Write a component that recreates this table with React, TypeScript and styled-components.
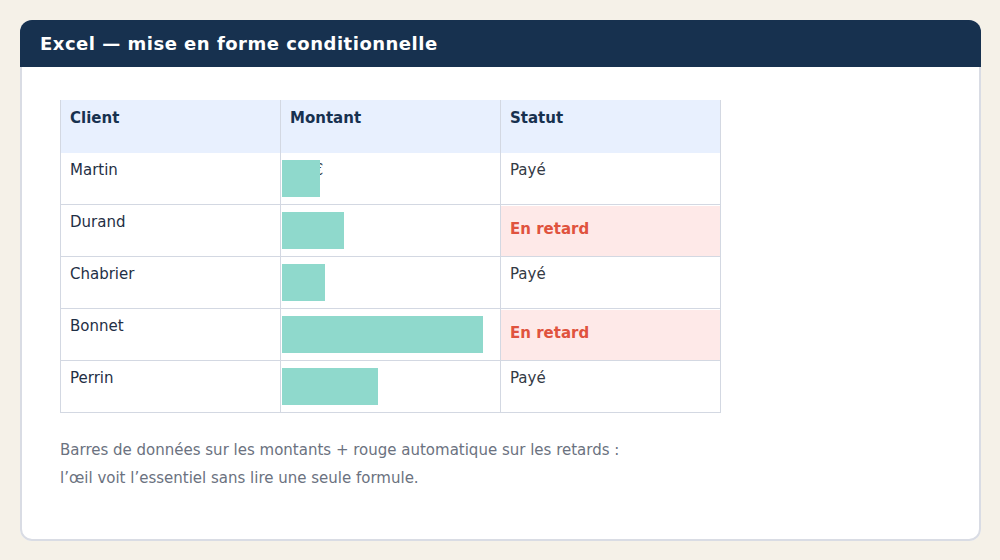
import React from "react";
import styled, { createGlobalStyle } from "styled-components";

const Global = createGlobalStyle`
  html, body { margin: 0; padding: 0; }
  body {
    background: #f5f1e8;
    font-family: "DejaVu Sans", Verdana, sans-serif;
  }
`;

const Page = styled.div`
  padding: 20px;
  width: 1000px;
  height: 560px;
  box-sizing: border-box;
`;

const Card = styled.section`
  width: 961px;
  height: 521px;
  box-sizing: border-box;
  background: #ffffff;
  border-radius: 12px;
  overflow: hidden;
  box-shadow: inset 0 0 0 2px #d9dce4;
  display: flex;
  flex-direction: column;
`;

const Header = styled.header`
  height: 47px;
  flex: none;
  background: #17314f;
  color: #ffffff;
  display: flex;
  align-items: center;
  padding: 0 20px;
  font-size: 18px;
  font-weight: bold;
  letter-spacing: 0.5px;
`;

const Body = styled.div`
  padding: 33px 40px 0;
`;

const Table = styled.div`
  display: grid;
  grid-template-columns: 220px 220px 221px;
  width: 661px;
`;

const Cell = styled.div<{ $head?: boolean; $last?: boolean }>`
  position: relative;
  box-sizing: border-box;
  height: ${(p) => (p.$head ? "53px" : "52px")};
  padding: ${(p) => (p.$head ? "9px 9px" : "8px 9px")};
  border-left: 1px solid #d3d8e2;
  border-right: ${(p) => (p.$last ? "1px solid #d3d8e2" : "none")};
  border-bottom: ${(p) => (p.$head ? "none" : "1px solid #d3d8e2")};
  background: ${(p) => (p.$head ? "#e8f0fe" : "#ffffff")};
  color: ${(p) => (p.$head ? "#17314f" : "#1f2f45")};
  font-size: 15px;
  font-weight: ${(p) => (p.$head ? "bold" : "normal")};
`;

const StatusText = styled.span`
  color: #333a44;
`;

const LateCell = styled(Cell)`
  padding: 0 9px 3px;
  display: flex;
  align-items: center;
  background: #fee9e8;
  box-shadow: inset 0 1px 0 #ffffff;
  color: #e0533e;
  font-weight: bold;
`;

const Amount = styled.span`
  color: #333a44;
`;

const Bar = styled.div`
  position: absolute;
  left: 1px;
  top: 7px;
  height: 37px;
  background: #8fd9cc;
`;

const Note = styled.p`
  margin: 23px 0 0;
  font-size: 15px;
  line-height: 28px;
  color: #6b7280;
`;

const rows = [
  { client: "Martin", amount: 80, late: false },
  { client: "Durand", amount: 130, late: true },
  { client: "Chabrier", amount: 90, late: false },
  { client: "Bonnet", amount: 420, late: true },
  { client: "Perrin", amount: 200, late: false },
];

const max = Math.max(...rows.map((r) => r.amount));

export default function App() {
  return (
    <Page>
      <Global />
      <Card>
        <Header>Excel — mise en forme conditionnelle</Header>
        <Body>
          <Table>
            <Cell $head>Client</Cell>
            <Cell $head>Montant</Cell>
            <Cell $head $last>Statut</Cell>
            {rows.map((r) => (
              <React.Fragment key={r.client}>
                <Cell>{r.client}</Cell>
                <Cell>
                  <Amount>{r.amount} €</Amount>
                  <Bar style={{ width: `${Math.round((r.amount / max) * 201)}px` }} />
                </Cell>
                {r.late ? (
                  <LateCell $last>En retard</LateCell>
                ) : (
                  <Cell $last>
                    <StatusText>Payé</StatusText>
                  </Cell>
                )}
              </React.Fragment>
            ))}
          </Table>
          <Note>
            Barres de données sur les montants + rouge automatique sur les retards :
            <br />
            l’œil voit l’essentiel sans lire une seule formule.
          </Note>
        </Body>
      </Card>
    </Page>
  );
}
